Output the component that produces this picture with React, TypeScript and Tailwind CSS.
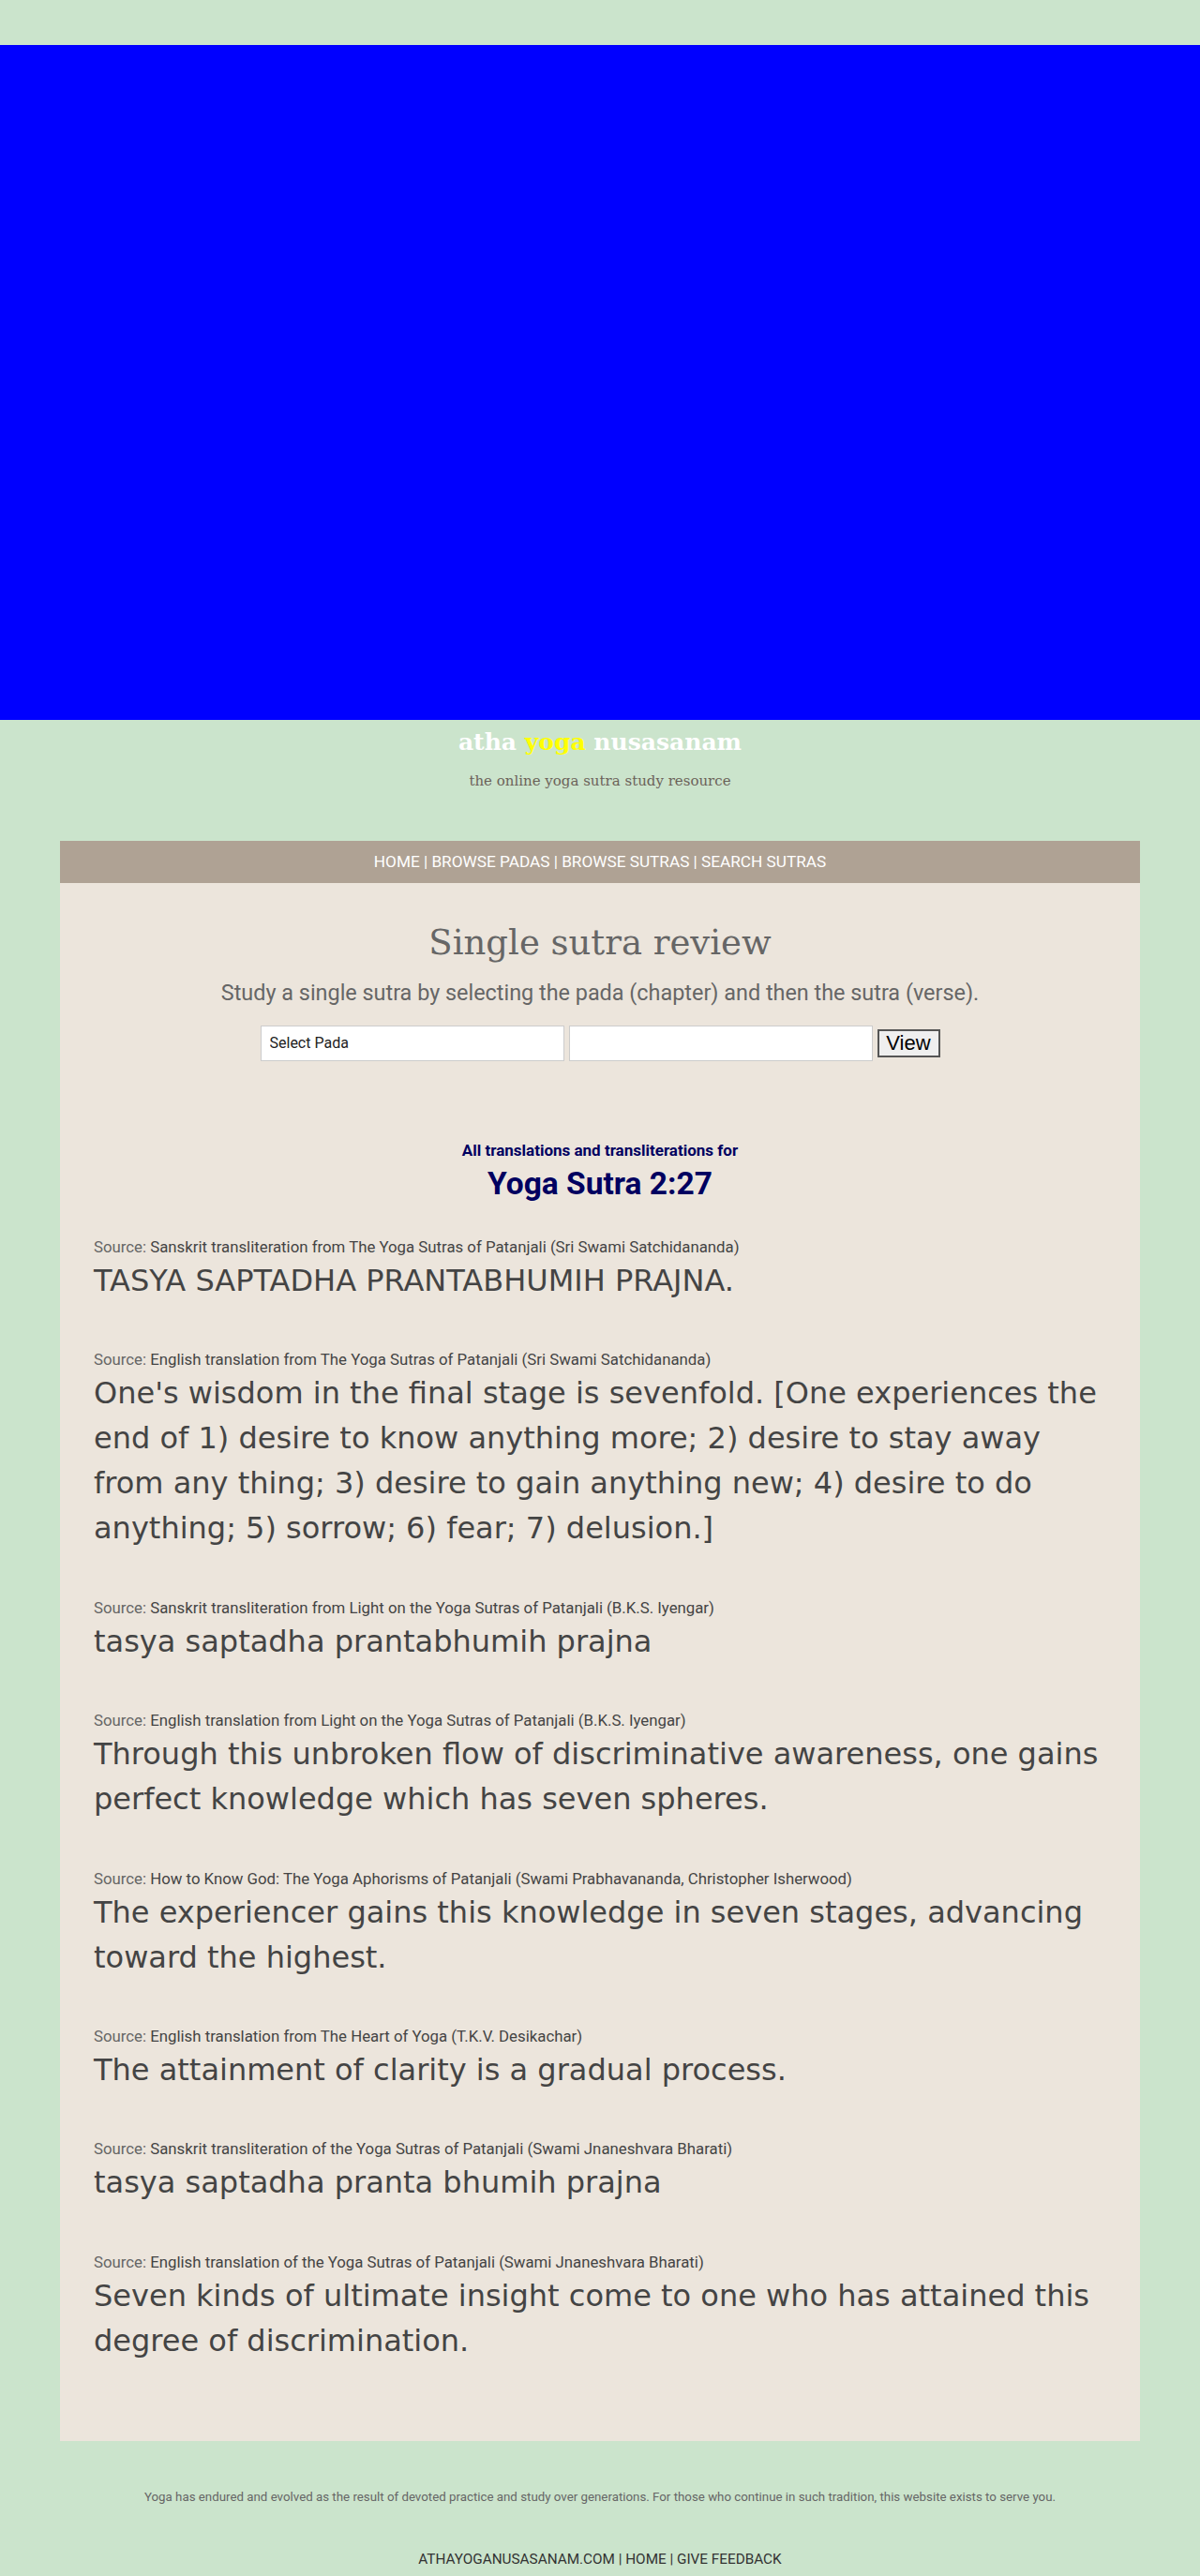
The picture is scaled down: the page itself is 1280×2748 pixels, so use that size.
import React from "react";

type Entry = {
  source: string;
  text: string;
};

const entries: Entry[] = [
  {
    source: "Sanskrit transliteration from The Yoga Sutras of Patanjali (Sri Swami Satchidananda)",
    text: "TASYA SAPTADHA PRANTABHUMIH PRAJNA.",
  },
  {
    source: "English translation from The Yoga Sutras of Patanjali (Sri Swami Satchidananda)",
    text: "One's wisdom in the final stage is sevenfold. [One experiences the end of 1) desire to know anything more; 2) desire to stay away from any thing; 3) desire to gain anything new; 4) desire to do anything; 5) sorrow; 6) fear; 7) delusion.]",
  },
  {
    source: "Sanskrit transliteration from Light on the Yoga Sutras of Patanjali (B.K.S. Iyengar)",
    text: "tasya saptadha prantabhumih prajna",
  },
  {
    source: "English translation from Light on the Yoga Sutras of Patanjali (B.K.S. Iyengar)",
    text: "Through this unbroken flow of discriminative awareness, one gains perfect knowledge which has seven spheres.",
  },
  {
    source: "How to Know God: The Yoga Aphorisms of Patanjali (Swami Prabhavananda, Christopher Isherwood)",
    text: "The experiencer gains this knowledge in seven stages, advancing toward the highest.",
  },
  {
    source: "English translation from The Heart of Yoga (T.K.V. Desikachar)",
    text: "The attainment of clarity is a gradual process.",
  },
  {
    source: "Sanskrit transliteration of the Yoga Sutras of Patanjali (Swami Jnaneshvara Bharati)",
    text: "tasya saptadha pranta bhumih prajna",
  },
  {
    source: "English translation of the Yoga Sutras of Patanjali (Swami Jnaneshvara Bharati)",
    text: "Seven kinds of ultimate insight come to one who has attained this degree of discrimination.",
  },
];

const SutraEntry = ({ entry }: { entry: Entry }) => {
  return (
    <div className="mb-[48.4px]">
      <p className="text-[16.8px] leading-[24px] text-[#444]">
        <span className="text-[#666]">Source: </span>
        {entry.source}
      </p>
      <p className="font-['DejaVu_Sans',sans-serif] text-[32px] leading-[48px] text-[#444]">
        {entry.text}
      </p>
    </div>
  );
};

const App = () => {
  return (
    <div className="min-h-screen bg-[#cbe4cc] pt-[48px] pb-[10px] font-['Roboto','Liberation_Sans',sans-serif]">
      <div className="h-[720px] w-full bg-[#0000ff]"></div>

      <header className="text-center">
        <h1 className="mt-[8px] font-['DejaVu_Serif',serif] text-[25px] font-bold leading-[31px] text-white">
          atha <span className="text-[#ffff00]">yoga</span> nusasanam
        </h1>
        <p className="mt-[15px] font-['DejaVu_Serif',serif] text-[15px] leading-[22px] text-[#6b6259]">
          the online yoga sutra study resource
        </p>
      </header>

      <main className="mx-[64px] mt-[53px]">
        <nav className="flex h-[45px] items-center justify-center bg-[#afa294] text-[17.2px] text-white">
          HOME | BROWSE PADAS | BROWSE SUTRAS | SEARCH SUTRAS
        </nav>

        <section className="bg-[#ece5dc] px-[36px] pt-[40px] pb-[35px]">
          <h2 className="text-center font-['DejaVu_Serif',serif] text-[37px] leading-[48px] text-[#666]">
            Single sutra review
          </h2>
          <p className="mt-[13px] text-center text-[23.4px] leading-[32px] text-[#666]">
            Study a single sutra by selecting the pada (chapter) and then the sutra (verse).
          </p>

          <div className="mt-[19px] flex items-center justify-center gap-[5px]">
            <select className="h-[38px] w-[324px] appearance-none border border-[#ccc] bg-white px-[9px] text-[16px] text-[#222] outline-none">
              <option>Select Pada</option>
            </select>
            <select className="h-[38px] w-[324px] appearance-none border border-[#ccc] bg-white px-[9px] text-[16px] text-[#222] outline-none">
              <option></option>
            </select>
            <button className="h-[30px] w-[67px] border-2 border-[#555] bg-[#efefef] font-['Liberation_Sans',sans-serif] text-[22px] leading-none text-black">
              View
            </button>
          </div>

          <p className="mt-[83px] text-center text-[17px] font-bold leading-[24px] text-[#000060]">
            All translations and transliterations for
          </p>
          <h3 className="mt-[4px] text-center text-[33.5px] font-bold leading-[40px] text-[#000060]">
            Yoga Sutra 2:27
          </h3>

          <div className="mt-[35px]">
            {entries.map((entry, i) => (
              <SutraEntry key={i} entry={entry} />
            ))}
          </div>
        </section>
      </main>

      <footer className="text-center">
        <p className="mt-[50px] text-[13.3px] leading-[20px] text-[#666]">
          Yoga has endured and evolved as the result of devoted practice and study over generations. For those who continue in such tradition, this website exists to serve you.
        </p>
        <p className="mt-[45px] text-[15.3px] leading-[22px] text-[#333]">
          ATHAYOGANUSASANAM.COM | HOME | GIVE FEEDBACK
        </p>
      </footer>
    </div>
  );
};

export default App;
